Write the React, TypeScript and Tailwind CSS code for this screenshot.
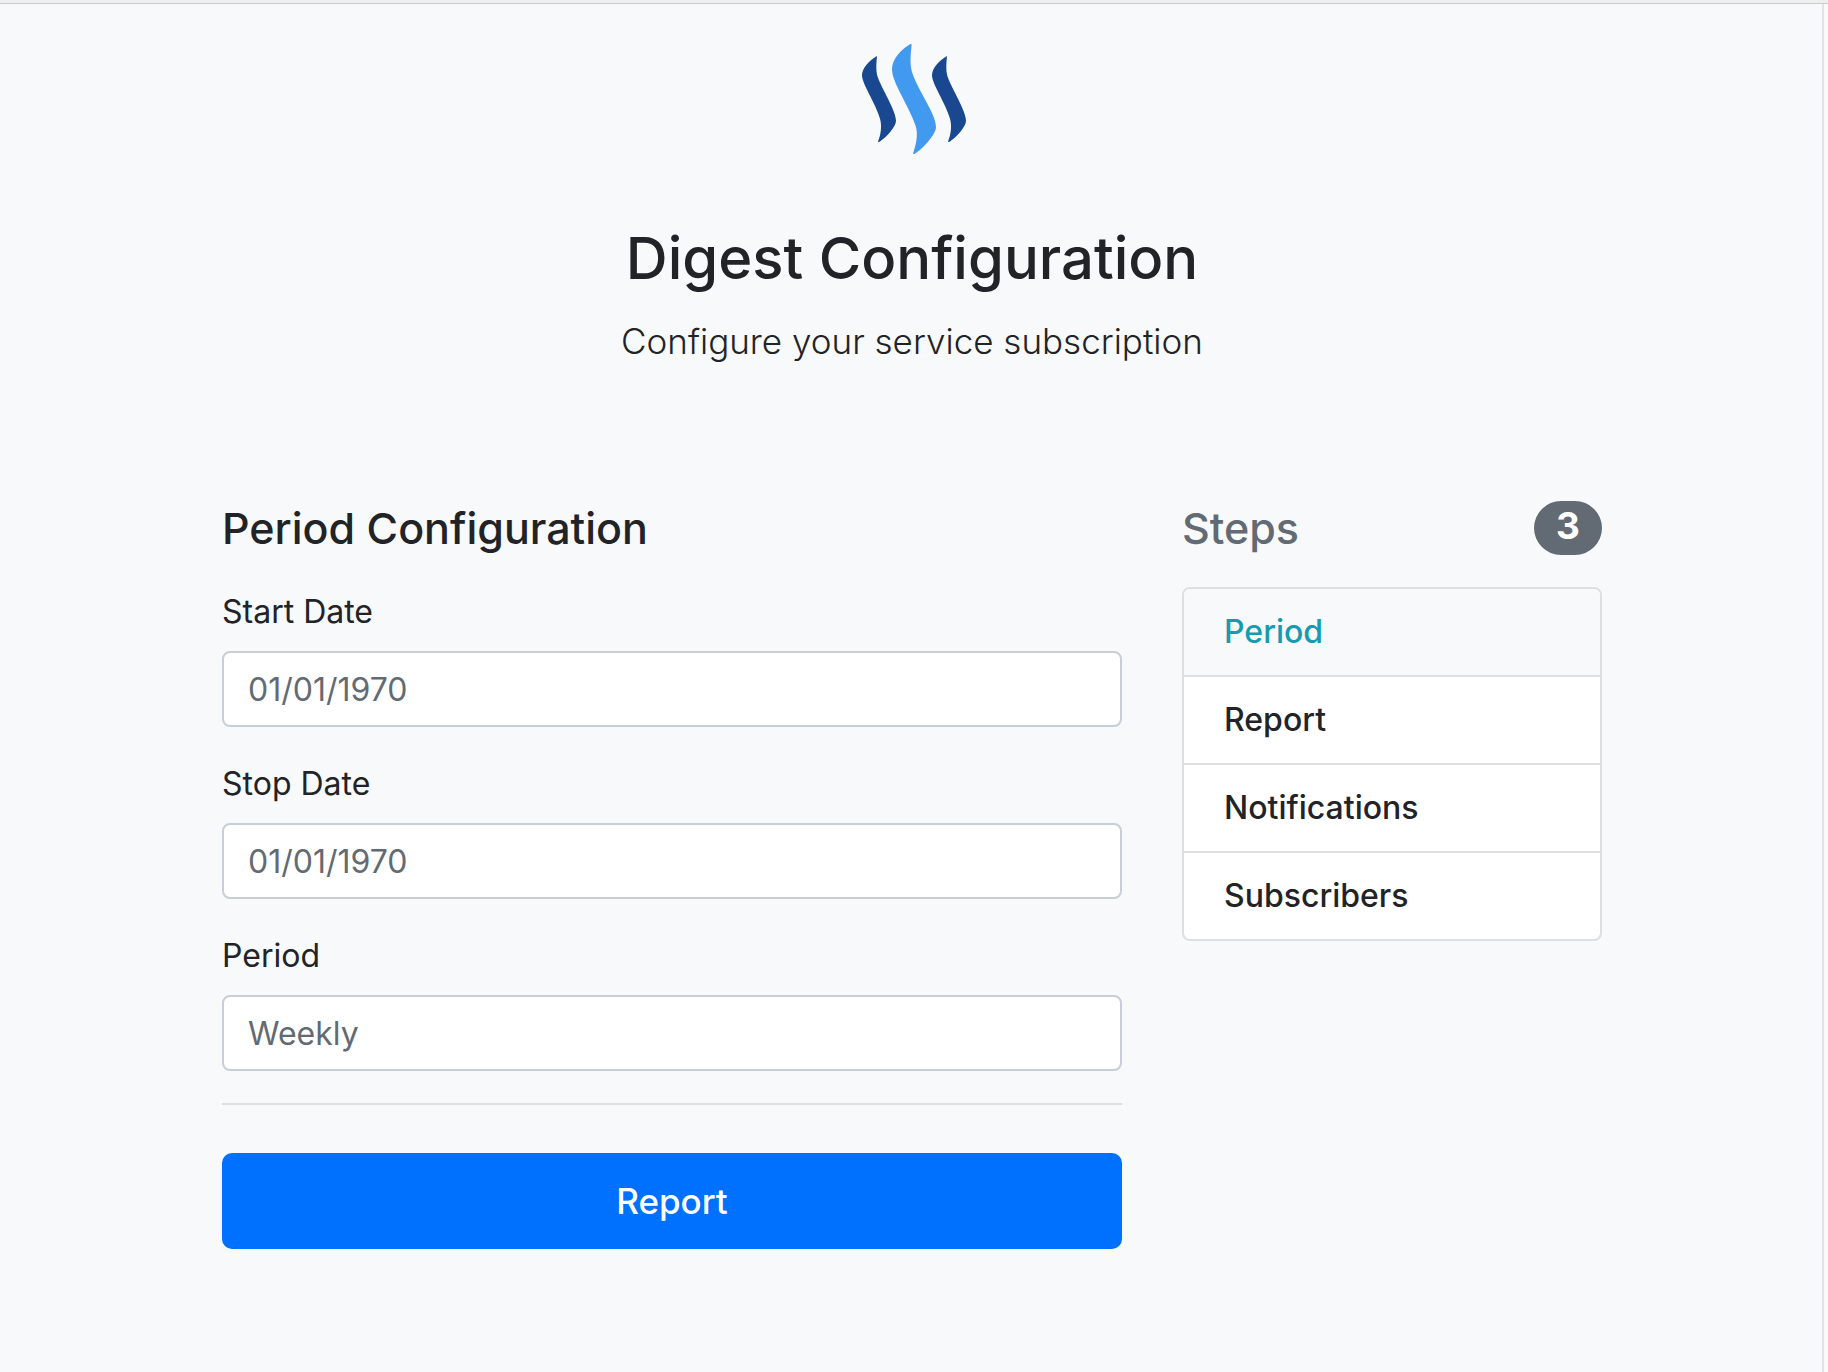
import React from "react";

const fields = [
  { id: "start-date", label: "Start Date", placeholder: "01/01/1970" },
  { id: "stop-date", label: "Stop Date", placeholder: "01/01/1970" },
  { id: "period", label: "Period", placeholder: "Weekly" },
];

const steps = ["Period", "Report", "Notifications", "Subscribers"];

function Logo() {
  return (
    <svg className="block h-[140px] w-[150px]" viewBox="-9 0 450 420" role="img" aria-label="Steem">
      <path
        fill="#1a4890"
        d="M111 78C89 90 66 114 66 136C66 162 106 218 120 266C126 288 123 312 114 335Q117 337 121 334C141 319 168 290 168 272C168 242 125 176 112 138C107 120 109 100 111 78Z"
      />
      <path
        fill="#4299f0"
        d="M215 43Q212 41 207 45C182 59 156 89 156 118C156 158 206 226 227 288C235 314 229 342 219 371Q223 373 227 370C252 352 288 312 288 291C288 250 235 186 216 126C209 101 212 74 215 43Z"
      />
      <path
        fill="#1a4890"
        d="M321 78C299 90 276 114 276 136C276 162 316 218 330 266C336 288 333 312 324 335Q327 337 331 334C351 319 378 290 378 272C378 242 335 176 322 138C317 120 319 100 321 78Z"
      />
    </svg>
  );
}

export default function App() {
  return (
    <div className="flex min-h-screen flex-col bg-[#f7f9fa] font-['Inter',sans-serif] text-[#212327]">
      <div className="h-1 border-b border-[#cbcccd] bg-[#eeeeee]" />
      <div className="flex grow">
        <div className="grow pl-0.5">
          <div className="mx-auto max-w-[1380px] pb-16">
            <header className="flex flex-col items-center pt-[26px] text-center">
              <Logo />
              <h1 className="mt-[50px] text-[58px] leading-[77px] font-medium">Digest Configuration</h1>
              <p className="mt-[14px] text-[35px] leading-[60px] font-light">Configure your service subscription</p>
            </header>

            <div className="mt-32 flex items-start gap-[60px]">
              <main className="min-w-0 grow">
                <h2 className="mb-[31px] text-[43px] leading-[58px] font-medium">Period Configuration</h2>
                <form>
                  <div className="flex flex-col gap-[33px]">
                    {fields.map((field) => (
                      <div key={field.id}>
                        <label htmlFor={field.id} className="mb-[15px] block text-[32px] leading-[48px]">
                          {field.label}
                        </label>
                        <input
                          id={field.id}
                          type="text"
                          placeholder={field.placeholder}
                          className="block h-[76px] w-full rounded-lg border-2 border-[#c8ced5] bg-white px-6 text-[32px] placeholder:text-[#626a73] placeholder:opacity-100"
                        />
                      </div>
                    ))}
                  </div>
                  <hr className="mt-8 mb-12 border-t-2 border-[#dedfe1]" />
                  <button
                    type="button"
                    className="block h-24 w-full rounded-[10px] bg-[#0070ff] text-[35px] leading-[60px] font-medium text-white"
                  >
                    Report
                  </button>
                </form>
              </main>

              <aside className="w-[420px] shrink-0">
                <h2 className="mb-[30px] flex items-center justify-between text-[43px] leading-[58px] font-medium text-[#626a73]">
                  <span>Steps</span>
                  <span className="rounded-full bg-[#626a73] px-[22px] pt-[7px] pb-[11px] text-[37px] leading-9 font-bold text-white">
                    3
                  </span>
                </h2>
                <ul className="divide-y-2 divide-[#dedfe0] overflow-hidden rounded-lg border-2 border-[#dedfe0] bg-white">
                  {steps.map((step, index) => (
                    <li key={step} className={index === 0 ? "bg-[#f7f9fa] text-[#189ab0]" : ""}>
                      <a href={"#" + step.toLowerCase()} className="block px-10 py-[19px] text-[32px] leading-[48px] font-medium">
                        {step}
                      </a>
                    </li>
                  ))}
                </ul>
              </aside>
            </div>
          </div>
        </div>
        <div className="w-[6px] shrink-0 border-l-2 border-[#e1e3e6] bg-[#fafafa]" />
      </div>
    </div>
  );
}
